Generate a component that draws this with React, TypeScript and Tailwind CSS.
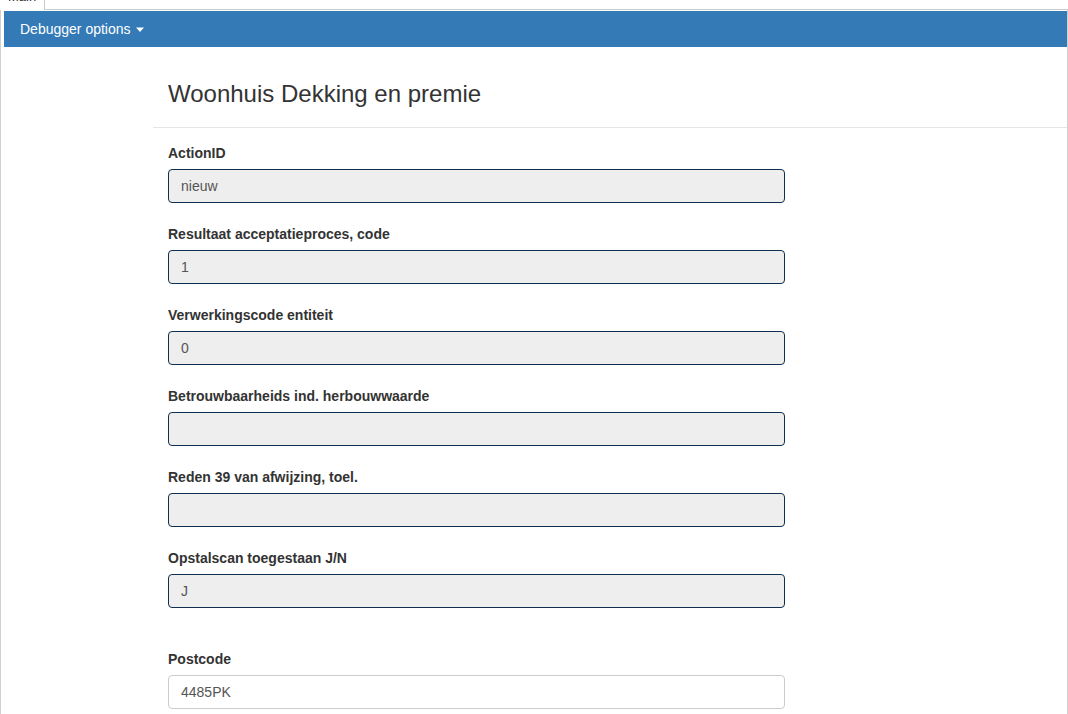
import React from "react";

const fields: { label: string; value: string }[] = [
  { label: "ActionID", value: "nieuw" },
  { label: "Resultaat acceptatieproces, code", value: "1" },
  { label: "Verwerkingscode entiteit", value: "0" },
  { label: "Betrouwbaarheids ind. herbouwwaarde", value: "" },
  { label: "Reden 39 van afwijzing, toel.", value: "" },
  { label: "Opstalscan toegestaan J/N", value: "J" },
];

function Field({ label, value, readOnly = true }: { label: string; value: string; readOnly?: boolean }) {
  return (
    <div className="mb-[21px]">
      <div className="h-[20px] leading-[20px] text-[14px] font-bold text-[#333] mb-[6px]">{label}</div>
      <div
        className={
          readOnly
            ? "w-[617px] h-[34px] rounded-[4px] border border-[#0f2f52] bg-[#eeeeee] px-[12px] text-[14px] leading-[32px] text-[#555]"
            : "w-[617px] h-[34px] rounded-[4px] border border-[#cccccc] bg-white px-[12px] text-[14px] leading-[32px] text-[#555]"
        }
      >
        {value}
      </div>
    </div>
  );
}

export default function App() {
  return (
    <div
      className="w-[1068px] h-[714px] overflow-hidden bg-white"
      style={{ fontFamily: '"Liberation Sans", Arial, sans-serif' }}
    >
      {/* tab strip */}
      <div className="flex h-[10px]">
        <div className="w-[45px] h-[10px] border-r border-[#cccccc] bg-white overflow-hidden relative">
          <span className="absolute left-[8px] top-[-10px] text-[13px] leading-[14px] text-[#333]">Main</span>
        </div>
        <div className="flex-1 border-b border-[#cccccc]"></div>
      </div>
      {/* body with side borders */}
      <div className="h-[704px] border-l border-[#d0d0d0] border-r pl-[3px] pt-[1px]">
        <div className="h-[36px] bg-[#337ab7] flex items-center pl-[16px] text-white text-[14px]">
          <span>Debugger options</span>
          <svg width="10" height="6" viewBox="0 0 10 6" className="ml-[4px] mt-[1px]">
            <path d="M1 0.5 L9 0.5 L5 5 Z" fill="#ffffff" />
          </svg>
        </div>
        <div className="ml-[149px]">
          <div className="pl-[15px] pt-[32px] pb-[18px] text-[24px] leading-[30px] text-[#333]">
            Woonhuis Dekking en premie
          </div>
          <div className="border-t border-[#e5e5e5]"></div>
          <div className="pl-[15px] pt-[15px]">
            {fields.map((f) => (
              <Field key={f.label} label={f.label} value={f.value} />
            ))}
            <div className="pt-[20px]">
              <Field label="Postcode" value="4485PK" readOnly={false} />
            </div>
          </div>
        </div>
      </div>
    </div>
  );
}
